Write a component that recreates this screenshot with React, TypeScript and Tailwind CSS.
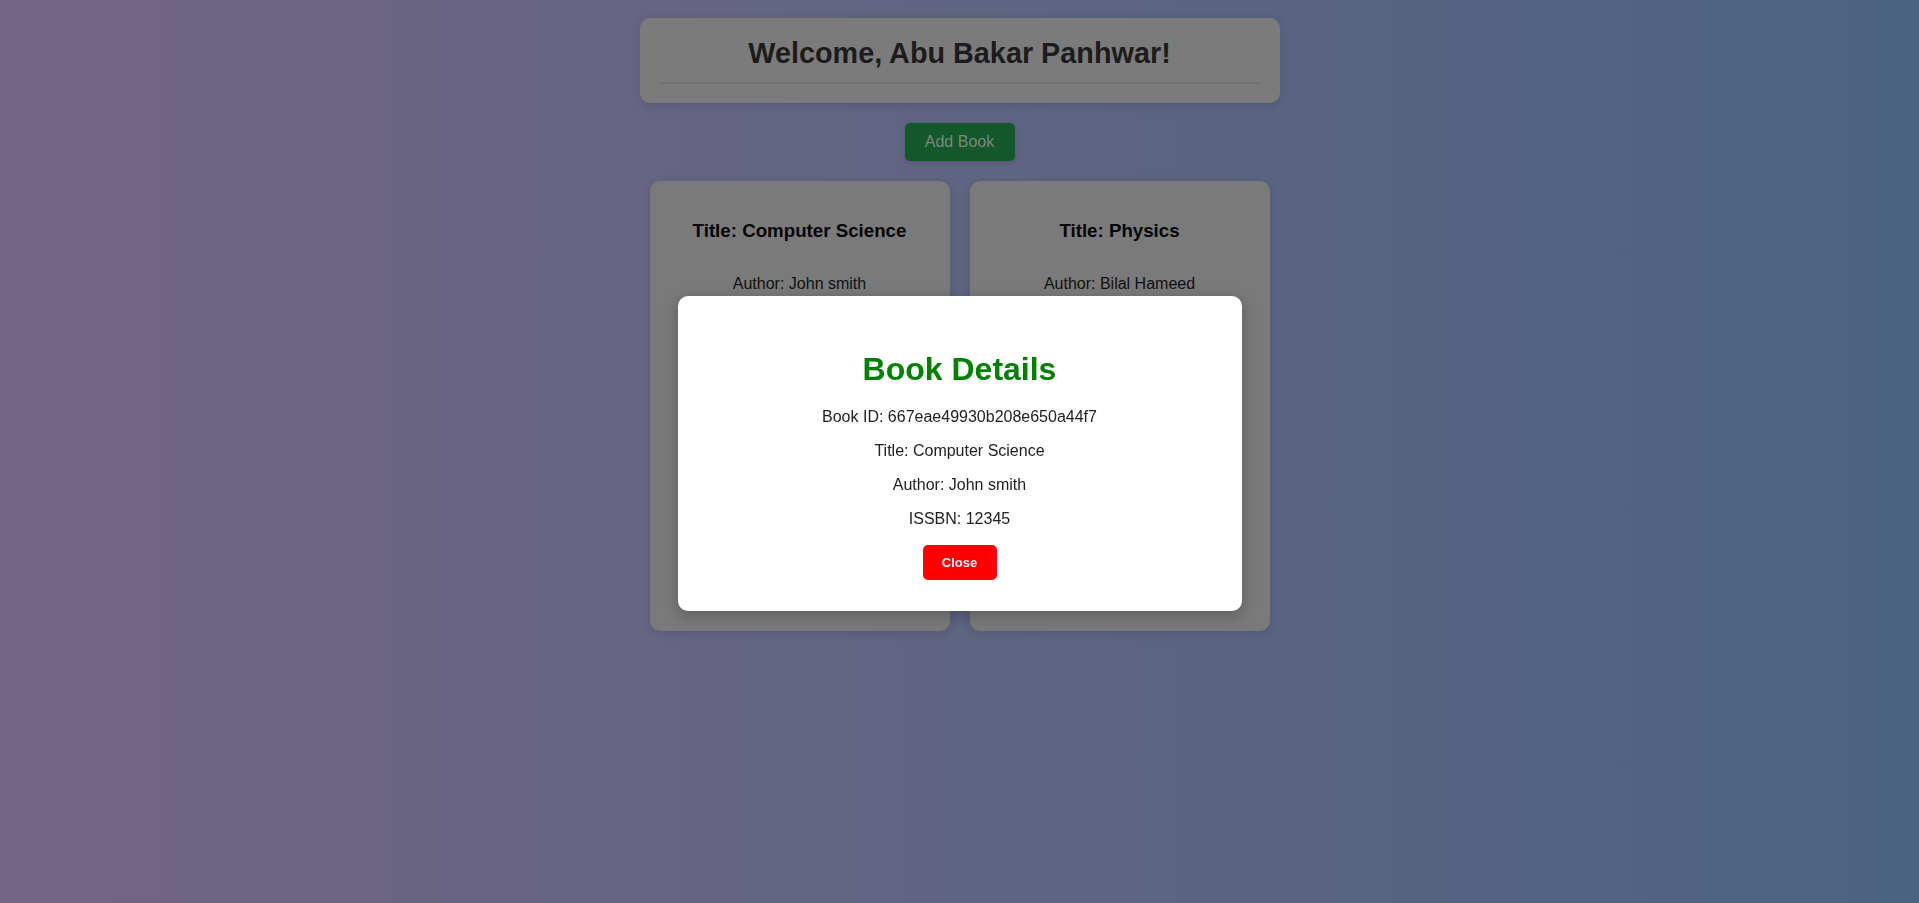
import React from "react";

const books = [
  { id: "667eae49930b208e650a44f7", title: "Computer Science", author: "John smith", isbn: "12345" },
  { id: "667eae49930b208e650a44f8", title: "Physics", author: "Bilal Hameed", isbn: "67890" },
];

export default function App() {
  const selected = books[0];
  return (
    <div
      className="min-h-screen w-full bg-linear-to-r from-[#736584] to-[#4a6381]"
      style={{ fontFamily: '"Liberation Sans", Arial, sans-serif' }}
    >
      <div className="flex flex-col items-center pt-[18px]">
        <div className="w-[640px] h-[85px] rounded-[10px] bg-[#7b7b7b] shadow-[0_2px_10px_rgba(0,0,0,0.12)] px-5 pt-[19px]">
          <h1 className="text-center text-[28.8px] leading-[33px] font-bold text-[#1c1c1c]">
            Welcome, Abu Bakar Panhwar!
          </h1>
          <div className="mt-[12px] h-[2px] bg-[#727272]" />
        </div>

        <button className="mt-[20px] w-[110px] h-[38px] rounded-[5px] bg-[#13572a] text-[16px] text-[#7c897d] shadow-[0_2px_6px_rgba(0,0,0,0.15)]">
          Add Book
        </button>

        <div className="mt-[20px] flex gap-5">
          {books.map((b) => (
            <div
              key={b.id}
              className="w-[300px] h-[450px] rounded-[10px] bg-[#7a7a7a] shadow-[0_2px_10px_rgba(0,0,0,0.12)] flex flex-col items-center pt-[39px]"
            >
              <h3 className="text-[18.72px] leading-[22px] font-bold text-[#050505]">Title: {b.title}</h3>
              <p className="mt-[33px] text-[16px] leading-[18px] text-[#111]">Author: {b.author}</p>
              <p className="mt-[16px] text-[16px] leading-[18px] text-[#111]">ISSBN: {b.isbn}</p>
              <div className="mt-[24px] flex flex-col gap-3 items-center">
                <button className="w-[120px] h-[36px] rounded-[5px] bg-[#0f3d73] text-[#80868f] text-[14px]">View</button>
                <button className="w-[120px] h-[36px] rounded-[5px] bg-[#7f0000] text-[#8a8080] text-[14px]">Delete</button>
              </div>
            </div>
          ))}
        </div>
      </div>

      <div className="fixed inset-0 flex justify-center items-start pt-[296px]">
        <div className="w-[564px] h-[315px] rounded-[10px] bg-white shadow-[0_4px_16px_rgba(0,0,0,0.25)] flex flex-col items-center pt-[55px]">
          <h2 className="text-[32px] leading-[37px] font-bold text-[#008000]">Book Details</h2>
          <div className="mt-[20px] flex flex-col items-center gap-4 text-[16px] leading-[18px] text-[#222]">
            <p>Book ID: {selected.id}</p>
            <p>Title: {selected.title}</p>
            <p>Author: {selected.author}</p>
            <p>ISSBN: {selected.isbn}</p>
          </div>
          <button className="mt-[17px] w-[74px] h-[35px] rounded-[5px] bg-[#ff0000] text-white text-[13px] font-bold">
            Close
          </button>
        </div>
      </div>
    </div>
  );
}
